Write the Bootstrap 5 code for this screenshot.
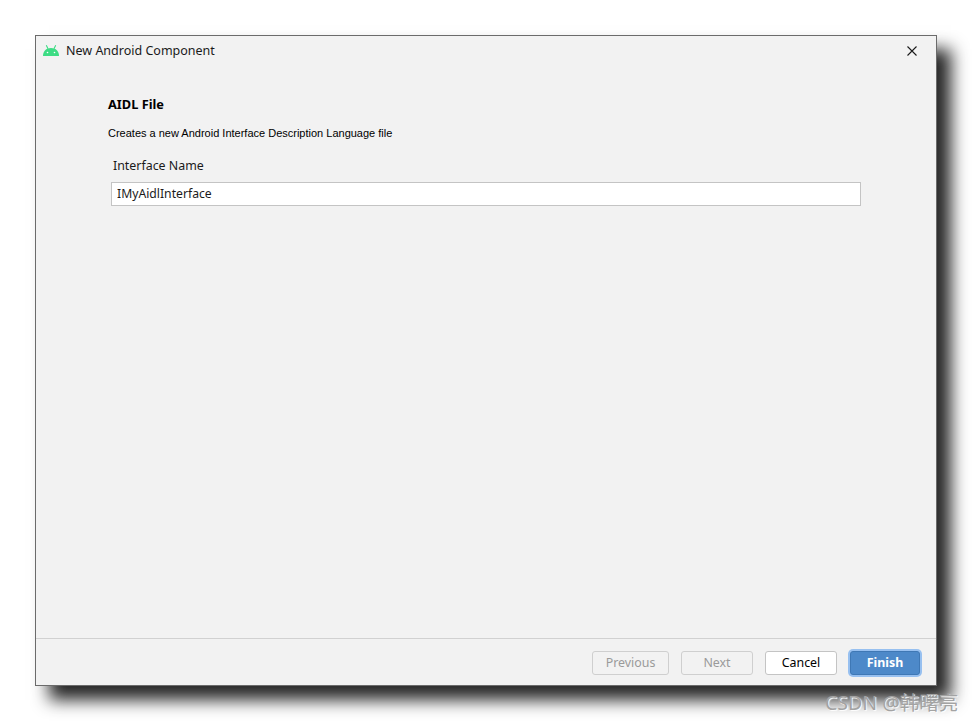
<!DOCTYPE html>
<html lang="en">
<head>
    <meta charset="UTF-8">
    <meta name="viewport" content="width=device-width, initial-scale=1.0">
    <title>New Android Component</title>
    <link href="https://cdn.jsdelivr.net/npm/bootstrap@5.3.3/dist/css/bootstrap.min.css" rel="stylesheet">
    <style>
        body {
            background-color: #fff;
            font-family: "Noto Sans", "Noto Sans CJK SC", sans-serif;
            font-size: 12.4px;
            color: #1a1a1a;
            overflow: hidden;
        }
        .page-wrap {
            height: 721px;
            padding: 35px 0 0 35px;
        }
        .dialog-win {
            width: 902px;
            height: 651px;
            background: #f2f2f2;
            border: 1px solid #6b6b6b;
            box-shadow: 14px 14px 16px rgba(0, 0, 0, 0.85);
        }
        .title-bar {
            height: 29px;
            padding: 0 19px 0 7px;
        }
        .droid-icon {
            width: 16px;
            height: 11px;
        }
        .title-text {
            margin-left: 7px;
            font-size: 12.5px;
            line-height: 29px;
        }
        .close-x {
            width: 10px;
            height: 10px;
        }
        .form-area {
            padding: 30px 76px 0 72px;
        }
        .step-title {
            font-size: 12.8px;
            font-weight: 700;
            line-height: 18px;
            color: #000;
        }
        .step-desc {
            font-family: "Liberation Sans", Arial, sans-serif;
            font-size: 11px;
            line-height: 14px;
            margin-top: 13px;
            color: #000;
        }
        .field-label {
            margin: 17px 0 7px 5px;
            line-height: 18px;
        }
        .name-input {
            width: 750px;
            height: 24px;
            margin-left: 3px;
            padding: 0 5px 2px;
            border: 1px solid #c4c4c4;
            border-radius: 0;
            font-size: 12.2px;
            color: #1a1a1a;
        }
        .foot-bar {
            height: 47px;
            border-top: 1px solid #d1d1d1;
            padding: 12px 16px 0 0;
        }
        .wiz-btn {
            height: 24px;
            width: 72px;
            padding: 0;
            font-size: 12.4px;
            line-height: 22px;
            border-radius: 3px;
            border: 1px solid #c4c4c4;
        }
        .wiz-btn:disabled {
            background: #f2f2f2;
            color: #9a9a9a;
            border-color: #cfcfcf;
            opacity: 1;
        }
        .btn-prev { width: 77px; margin-right: 12px; }
        .btn-cancel { background: #fff; color: #000; margin-left: 12px; margin-right: 13px; }
        .btn-finish {
            width: 70px;
            background: #4d89c9;
            border-color: #3f78b5;
            color: #fff;
            font-weight: 700;
            box-shadow: 0 0 0 2px #97c0f0;
        }
        .wm-text {
            position: absolute;
            left: 825px;
            top: 690px;
            font-size: 19.5px;
            line-height: 26px;
            color: #a3a3a3;
            text-shadow: 1px 1px 1px #fff;
        }
    </style>
</head>
<body>

<div class="page-wrap">
    <div class="dialog-win d-flex flex-column">
        <div class="title-bar d-flex align-items-center">
            <svg class="droid-icon" viewBox="0 0 16 11">
                <path fill="#3ddc84" d="M0 11C0 6.500 3 3 8 3S16 6.500 16 11Z"/>
                <path stroke="#3ddc84" stroke-width="1.100" d="M3.300 0.300 5 3.800M12.700 0.300 11 3.800"/>
                <circle cx="4.500" cy="7.500" r="0.800" fill="#fff"/>
                <circle cx="11.500" cy="7.500" r="0.800" fill="#fff"/>
            </svg>
            <span class="title-text">New Android Component</span>
            <svg class="close-x ms-auto" viewBox="0 0 10 10">
                <path stroke="#1a1a1a" stroke-width="1.100" d="M0.500 0.500 9.500 9.500M9.500 0.500 0.500 9.500"/>
            </svg>
        </div>
        <div class="form-area flex-grow-1">
            <div class="step-title">AIDL File</div>
            <div class="step-desc">Creates a new Android Interface Description Language file</div>
            <div class="field-label">Interface Name</div>
            <input class="form-control name-input" type="text" value="IMyAidlInterface">
        </div>
        <div class="foot-bar d-flex justify-content-end align-items-start">
            <button class="btn wiz-btn btn-prev" disabled>Previous</button>
            <button class="btn wiz-btn" disabled>Next</button>
            <button class="btn wiz-btn btn-cancel">Cancel</button>
            <button class="btn wiz-btn btn-finish">Finish</button>
        </div>
    </div>
</div>
<div class="wm-text">CSDN @韩曙亮</div>

<script src="https://cdn.jsdelivr.net/npm/bootstrap@5.3.3/dist/js/bootstrap.bundle.min.js"></script>
</body>
</html>
